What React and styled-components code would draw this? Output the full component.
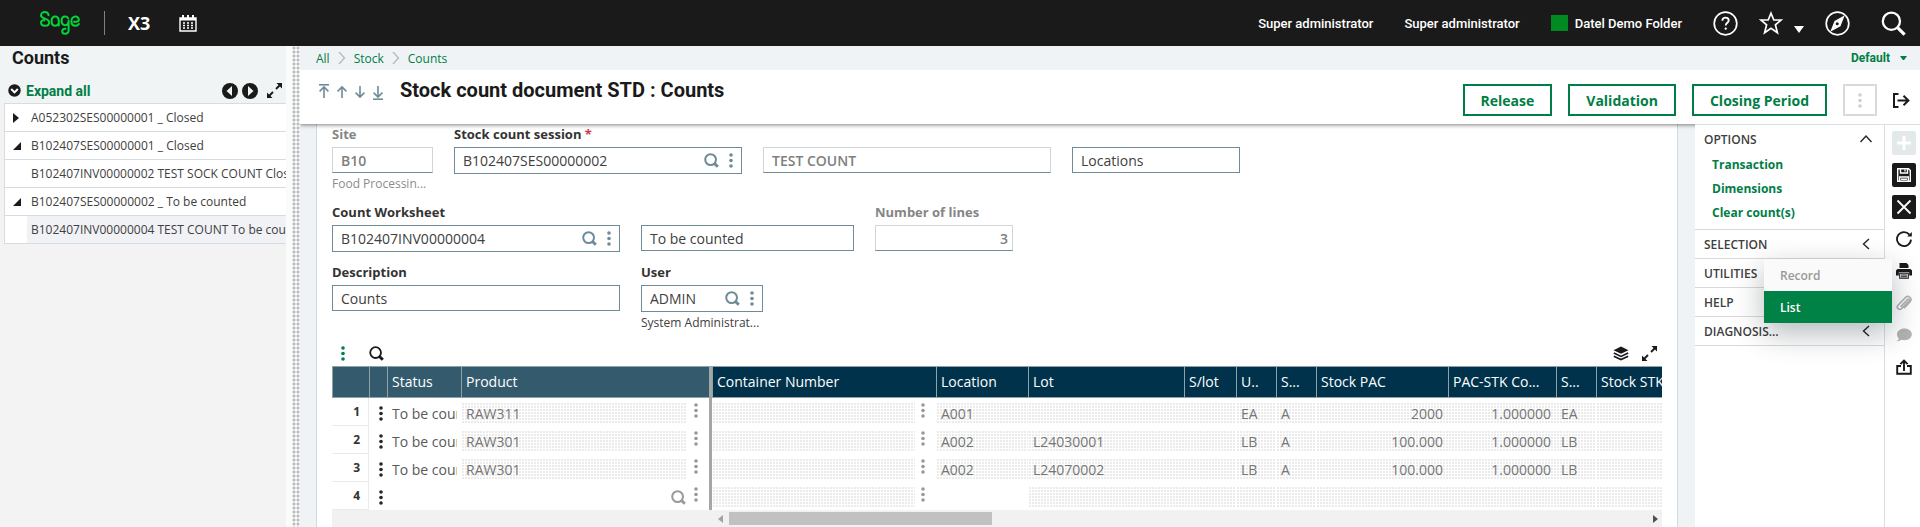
import React, { useState } from 'react';
import styled, { createGlobalStyle, css } from 'styled-components';

const GREEN = '#007e45';
const SLATE = '#6f8b98';

const treeRows = [
    { id: 1, label: 'A052302SES00000001 _ Closed', state: 'closed' },
    { id: 2, label: 'B102407SES00000001 _ Closed', state: 'open' },
    { id: 3, label: 'B102407INV00000002 TEST SOCK COUNT Closed' },
    { id: 4, label: 'B102407SES00000002 _ To be counted', state: 'open' },
    { id: 5, label: 'B102407INV00000004 TEST COUNT To be counted', selected: true },
];

const columns = [
    { key: 'no', title: '', width: 37, frozen: true },
    { key: 'menu', title: '', width: 18, frozen: true },
    { key: 'status', title: 'Status', width: 74, frozen: true },
    { key: 'product', title: 'Product', width: 251, frozen: true, last: true },
    { key: 'container', title: 'Container Number', width: 224 },
    { key: 'location', title: 'Location', width: 92 },
    { key: 'lot', title: 'Lot', width: 156 },
    { key: 'slot', title: 'S/lot', width: 52 },
    { key: 'unit', title: 'U..', width: 40 },
    { key: 'st', title: 'S...', width: 40 },
    { key: 'pac', title: 'Stock PAC', width: 132, right: true },
    { key: 'conv', title: 'PAC-STK Co...', width: 108, right: true },
    { key: 'stk', title: 'S...', width: 40 },
    { key: 'stockStk', title: 'Stock STK' },
];

const lines = [
    { no: 1, status: 'To be counted', product: 'RAW311', location: 'A001', lot: '', unit: 'EA', st: 'A', pac: '2000', conv: '1.000000', stk: 'EA' },
    { no: 2, status: 'To be counted', product: 'RAW301', location: 'A002', lot: 'L24030001', unit: 'LB', st: 'A', pac: '100.000', conv: '1.000000', stk: 'LB' },
    { no: 3, status: 'To be counted', product: 'RAW301', location: 'A002', lot: 'L24070002', unit: 'LB', st: 'A', pac: '100.000', conv: '1.000000', stk: 'LB' },
    { no: 4, empty: true },
];

/* ---------- icons ---------- */

const SageLogo = () => (
    <svg width="40" height="24" viewBox="0 0 40 24" fill="none" stroke="#00d639" strokeWidth="2" strokeLinecap="round" strokeLinejoin="round">
        <path d="M8.6 4.2C8.2 2.2 6.8 1 5 1C2.6 1 1 2.6 1 4.4C1 8 9.2 7.2 9.2 11.2C9.2 13.4 7.4 14.8 5 14.8C2.6 14.8 1 13.4 1 11.6C1 9.8 2.6 8.8 4.2 9.4" />
        <path d="M18.8 14.6V9.8C18.8 7.2 17.4 5.6 15.2 5.6C13 5.6 11.6 7.4 11.6 10.2C11.6 13 13 14.8 15.2 14.8C16.6 14.8 17.6 14.2 18.2 13" />
        <path d="M28.2 7.4C27.6 6.2 26.6 5.6 25.2 5.6C23 5.6 21.6 7.2 21.6 9.8C21.6 12.6 23 14.2 25.2 14.2C27 14.2 28.6 12.6 28.6 9.8V19C28.6 21.4 27.4 22.8 25.2 22.8C23.4 22.8 22.2 21.8 22.2 20.2C22.2 18.6 23.6 17.6 25.4 17.8" />
        <path d="M34 10.8H36.4C38 10.8 38.8 10 38.8 8.8C38.8 7 37.4 5.6 35.4 5.6C33 5.6 31.4 7.4 31.4 10.2C31.4 13 33 14.8 35.4 14.8C37 14.8 38.2 14.2 38.8 13" />
    </svg>
);

const CalendarIcon = () => (
    <svg width="18" height="17" viewBox="0 0 18 17" fill="none">
        <path d="M1 3H17V16H1Z" stroke="#fff" strokeWidth="1.4" />
        <path d="M1 3H17V5.6H1ZM3 0H5V3H3ZM8 0H10V3H8ZM13 0H15V3H13Z" fill="#fff" />
        <path d="M4 8H6M8 8H10M12 8H14M4 10.5H6M8 10.5H10M12 10.5H14M4 13H6M8 13H10M12 13H14" stroke="#fff" strokeWidth="1.5" />
    </svg>
);

const HelpIcon = () => (
    <svg width="25" height="25" viewBox="0 0 25 25" fill="none" stroke="#fff">
        <circle cx="12.5" cy="12.5" r="11.3" strokeWidth="1.7" />
        <path d="M9.4 9.8C9.4 7.8 10.7 6.6 12.5 6.6S15.7 7.8 15.7 9.4C15.7 11.7 12.7 11.8 12.7 14.6" strokeWidth="1.9" />
        <circle cx="12.7" cy="17.6" r=".9" fill="#fff" strokeWidth=".6" />
    </svg>
);

const StarIcon = () => (
    <svg width="24" height="24" viewBox="0 0 24 24" fill="none" stroke="#fff" strokeWidth="1.7" strokeLinejoin="miter">
        <path d="M12 2.2L14.8 9H22.2L16.4 13.8L18.4 21.8L12 17.2L5.6 21.8L7.6 13.8L1.8 9H9.2Z" />
    </svg>
);

const CompassIcon = () => (
    <svg width="25" height="25" viewBox="0 0 25 25" fill="none" stroke="#fff">
        <circle cx="12.5" cy="12.5" r="11.3" strokeWidth="1.7" />
        <path d="M18.6 5.6L15 14.8L6.4 19.4L10 10.4Z" strokeWidth="1.2" fill="#fff" />
        <circle cx="12.2" cy="12.8" r="1.5" fill="#1a1a1a" stroke="none" />
    </svg>
);

const TopSearchIcon = () => (
    <svg width="25" height="25" viewBox="0 0 25 25" fill="none" stroke="#fff">
        <circle cx="10.4" cy="10.2" r="8.6" strokeWidth="2.3" />
        <path d="M16.8 16.8L23.6 23.6" strokeWidth="3.2" />
    </svg>
);

const SearchIcon = ({ color = SLATE, width = 2 }) => (
    <svg width="15" height="15" viewBox="0 0 15 15" fill="none" stroke={color}>
        <circle cx="6.6" cy="6.6" r="5.4" strokeWidth={width} />
        <path d="M10 10L13.8 13.8" strokeWidth="3" />
    </svg>
);

const Dots = ({ color = SLATE }) => (
    <svg width="4" height="15" viewBox="0 0 4 15" fill={color}>
        <circle cx="2" cy="2" r="1.8" /><circle cx="2" cy="7.5" r="1.8" /><circle cx="2" cy="13" r="1.8" />
    </svg>
);

const Caret = ({ color = '#fff', size = 10 }) => (
    <svg width={size} height={size * 0.7} viewBox="0 0 10 7" fill={color}><path d="M0 0H10L5 7Z" /></svg>
);

const ExpandIcon = () => (
    <svg width="15" height="15" viewBox="0 0 15 15" fill="none" stroke="#1a1a1a" strokeWidth="1.8">
        <path d="M9 6L13 2M6 9L2 13" />
        <path d="M9.5 0H15V5.5ZM0 9.5V15H5.5Z" fill="#1a1a1a" stroke="none" />
    </svg>
);

const RoundArrow = ({ flip }) => (
    <svg width="16" height="16" viewBox="0 0 16 16">
        <circle cx="8" cy="8" r="8" fill="#1a1a1a" />
        <path d={flip ? 'M6 3L11.5 8L6 13Z' : 'M10 3L4.5 8L10 13Z'} fill="#f0f4f5" />
    </svg>
);

const ExpandAllIcon = () => (
    <svg width="13" height="13" viewBox="0 0 13 13" fill="none">
        <circle cx="6.5" cy="6.5" r="6.2" fill="#1a1a1a" />
        <path d="M3.2 5L6.5 8.4L9.8 5" stroke="#fff" strokeWidth="2" />
    </svg>
);

const NavArrow = ({ down, bar }) => (
    <svg width="12" height="16" viewBox="0 0 12 16" fill="none" stroke={SLATE} strokeWidth="1.6">
        {down ? <path d="M6 2V13M1.6 8.6L6 13L10.4 8.6" /> : <path d="M6 14V3M1.6 7.4L6 3L10.4 7.4" />}
        {bar && <path d={down ? 'M1 15.2H11' : 'M1 .8H11'} />}
    </svg>
);

const Chevron = ({ d, color = '#262626' }) => (
    <svg width="12" height="12" viewBox="0 0 12 12" fill="none" stroke={color} strokeWidth="1.4"><path d={d} /></svg>
);

const ExitIcon = () => (
    <svg width="17" height="15" viewBox="0 0 17 15" fill="none" stroke="#1a1a1a" strokeWidth="2">
        <path d="M5.5 1H1V14H5.5M4.5 7.5H15M10.5 2.8L15.4 7.5L10.5 12.2" />
    </svg>
);

const LayersIcon = () => (
    <svg width="16" height="15" viewBox="0 0 16 15" fill="none" stroke="#1a1a1a" strokeWidth="1.7">
        <path d="M8 .5L15.5 4.2L8 7.8L.5 4.2Z" fill="#1a1a1a" stroke="none" />
        <path d="M.8 7L8 10.4L15.2 7M.8 10.2L8 13.6L15.2 10.2" />
    </svg>
);

const PlusIcon = () => (
    <svg width="24" height="24" viewBox="0 0 24 24" stroke="#fff" strokeWidth="3"><path d="M12 5V19M5 12H19" /></svg>
);

const SaveIcon = () => (
    <svg width="24" height="24" viewBox="0 0 24 24" fill="none" stroke="#fff" strokeWidth="1.4">
        <path d="M5.7 5.7H16.5L18.3 7.5V18.3H5.7ZM8.5 5.7V10H15.5V5.7M7.7 18.3V14H16.3V18.3M9 16.2H15" />
        <path d="M13 6.5V8.5" />
    </svg>
);

const CloseIcon = () => (
    <svg width="24" height="24" viewBox="0 0 24 24" stroke="#fff" strokeWidth="1.8"><path d="M5.5 5.5L18.5 18.5M18.5 5.5L5.5 18.5" /></svg>
);

const RefreshIcon = () => (
    <svg width="16" height="16" viewBox="0 0 16 16" fill="none" stroke="#1a1a1a" strokeWidth="1.8">
        <path d="M13.4 3.6A7 7 0 1 0 15 8.6" />
        <path d="M15.8 1V5.6H11.2Z" fill="#1a1a1a" stroke="none" />
    </svg>
);

const PrintIcon = () => (
    <svg width="16" height="16" viewBox="0 0 16 16" fill="#1a1a1a">
        <path d="M3.5 0H10.5L12.5 2V5H3.5ZM1.5 6H14.5L16 7.5V12.5H13.2V9.2H2.8V12.5H0V7.5Z" />
        <path d="M3.7 10.2H12.3V15.2H3.7ZM5 12H11M5 13.7H11" fill="#fff" stroke="#1a1a1a" strokeWidth="1.1" />
    </svg>
);

const ClipIcon = () => (
    <svg width="16" height="16" viewBox="0 0 16 16" fill="none" stroke="#b3b3b3" strokeWidth="1.6">
        <path d="M4.6 11.8L11.6 4.4C12.6 3.4 14 4.8 13 5.8L5.6 13.6C3.2 15.8 -.2 12.8 2 10.2L9.6 2.4C12.4 -.4 16.8 3.6 14.2 6.6L8 13.2" />
    </svg>
);

const ChatIcon = () => (
    <svg width="16" height="14" viewBox="0 0 16 14" fill="#b3b3b3">
        <path d="M8.4 .5C4.2 .5 1 3 1 6.2C1 8.2 2 9.6 2.8 10.4C2.4 11.8 1.4 12.6 .3 13.2C2.4 13.4 4.2 12.8 5.4 11.8C11.6 13.2 15.8 10.2 15.8 6.2C15.8 3 12.6 .5 8.4 .5Z" />
    </svg>
);

const ShareIcon = () => (
    <svg width="16" height="16" viewBox="0 0 16 16" fill="none" stroke="#1a1a1a" strokeWidth="1.9">
        <path d="M5 7H1.2V14.8H14.8V7H11M8 12V2M4.4 5.2L8 1.5L11.6 5.2" />
    </svg>
);

/* ---------- page ---------- */

const App = () => {
    const [session, setSession] = useState('B102407SES00000002');
    const [worksheet, setWorksheet] = useState('B102407INV00000004');
    const [description, setDescription] = useState('Counts');
    const [user, setUser] = useState('ADMIN');

    return (
        <Page>
            <GlobalStyle />
            <TopBar>
                <SageLogo />
                <Divider />
                <Product>X3</Product>
                <IconButton aria-label="Calendar"><CalendarIcon /></IconButton>
                <TopRight>
                    <TopLink href="#user">Super administrator</TopLink>
                    <TopLink href="#role">Super administrator</TopLink>
                    <TopLink href="#folder"><Swatch />Datel Demo Folder</TopLink>
                    <TopIcons>
                        <IconButton aria-label="Help"><HelpIcon /></IconButton>
                        <IconButton aria-label="Favorites"><StarIcon /><CaretSlot><Caret /></CaretSlot></IconButton>
                        <IconButton aria-label="Navigation"><CompassIcon /></IconButton>
                    </TopIcons>
                    <IconButton aria-label="Search"><TopSearchIcon /></IconButton>
                </TopRight>
            </TopBar>

            <Body>
                <Aside>
                    <AsideHead>
                        <AsideTitle>Counts</AsideTitle>
                        <AsideTools>
                            <ExpandAll><ExpandAllIcon />Expand all</ExpandAll>
                            <AsideNav>
                                <IconButton aria-label="Previous"><RoundArrow /></IconButton>
                                <IconButton aria-label="Next"><RoundArrow flip /></IconButton>
                                <Enlarge aria-label="Enlarge"><ExpandIcon /></Enlarge>
                            </AsideNav>
                        </AsideTools>
                    </AsideHead>
                    <Tree>
                        {treeRows.map((row) => (
                            <TreeRow key={row.id}>
                                <TreeToggle>
                                    {row.state === 'closed' && <svg width="6" height="10" viewBox="0 0 6 10"><path d="M0 0L6 5L0 10Z" fill="#1a1a1a" /></svg>}
                                    {row.state === 'open' && <svg width="8" height="8" viewBox="0 0 8 8"><path d="M8 0V8H0Z" fill="#1a1a1a" /></svg>}
                                </TreeToggle>
                                <TreeLabel $selected={row.selected}>{row.label}</TreeLabel>
                            </TreeRow>
                        ))}
                    </Tree>
                </Aside>
                <Splitter />

                <Main>
                    <Crumbs>
                        <Crumb href="#all">All</Crumb>
                        <Chevron color="#b3bcc1" d="M3 0L8.5 6L3 12" />
                        <Crumb href="#stock">Stock</Crumb>
                        <Chevron color="#b3bcc1" d="M3 0L8.5 6L3 12" />
                        <Crumb href="#counts">Counts</Crumb>
                        <ViewPicker>
                            <ViewSelect aria-label="View" defaultValue="Default"><option>Default</option></ViewSelect>
                            <Caret color={GREEN} size={7} />
                        </ViewPicker>
                    </Crumbs>
                    <Header>
                        <RecordNav>
                            <IconButton aria-label="First"><NavArrow bar /></IconButton>
                            <IconButton aria-label="Previous record"><NavArrow /></IconButton>
                            <IconButton aria-label="Next record"><NavArrow down /></IconButton>
                            <IconButton aria-label="Last"><NavArrow down bar /></IconButton>
                        </RecordNav>
                        <Title>Stock count document STD : Counts</Title>
                        <Actions>
                            <ActionButton>Release</ActionButton>
                            <ActionButton>Validation</ActionButton>
                            <ActionButton>Closing Period</ActionButton>
                            <MoreButton aria-label="More"><Dots color="#d0d0d0" /></MoreButton>
                            <IconButton aria-label="Exit"><ExitIcon /></IconButton>
                        </Actions>
                    </Header>

                    <Content>
                        <Card>
                            <FieldRow>
                                <Field $width={101}>
                                    <Label htmlFor="site" $muted>Site</Label>
                                    <Box $locked><Input id="site" value="B10" readOnly /></Box>
                                    <Hint $muted>Food Processin...</Hint>
                                </Field>
                                <Field $width={288}>
                                    <Label htmlFor="session">Stock count session <Required>*</Required></Label>
                                    <Box $lookup>
                                        <Input id="session" value={session} onChange={(e) => setSession(e.target.value)} />
                                        <SearchIcon /><Dots />
                                    </Box>
                                </Field>
                                <Field $width={288}>
                                    <Label />
                                    <Box $locked><Input aria-label="Session description" value="TEST COUNT" readOnly /></Box>
                                </Field>
                                <Field $width={168}>
                                    <Label />
                                    <Box><Input aria-label="Count by" defaultValue="Locations" /></Box>
                                </Field>
                            </FieldRow>
                            <FieldRow>
                                <Field $width={288}>
                                    <Label htmlFor="worksheet">Count Worksheet</Label>
                                    <Box $lookup>
                                        <Input id="worksheet" value={worksheet} onChange={(e) => setWorksheet(e.target.value)} />
                                        <SearchIcon /><Dots />
                                    </Box>
                                </Field>
                                <Field $width={213}>
                                    <Label />
                                    <Box><Input aria-label="Worksheet status" defaultValue="To be counted" /></Box>
                                </Field>
                                <Field $width={138}>
                                    <Label htmlFor="lines" $muted>Number of lines</Label>
                                    <Box $locked $right><Input id="lines" value="3" readOnly /></Box>
                                </Field>
                            </FieldRow>
                            <FieldRow>
                                <Field $width={288}>
                                    <Label htmlFor="description">Description</Label>
                                    <Box><Input id="description" value={description} onChange={(e) => setDescription(e.target.value)} /></Box>
                                </Field>
                                <Field $width={122}>
                                    <Label htmlFor="user">User</Label>
                                    <Box $lookup>
                                        <Input id="user" value={user} onChange={(e) => setUser(e.target.value)} />
                                        <SearchIcon /><Dots />
                                    </Box>
                                    <Hint>System Administrat...</Hint>
                                </Field>
                            </FieldRow>

                            <GridTools>
                                <IconButton aria-label="Grid menu"><Dots color={GREEN} /></IconButton>
                                <IconButton aria-label="Search lines"><SearchIcon color="#1a1a1a" width={1.8} /></IconButton>
                                <GridToolsRight>
                                    <IconButton aria-label="Layers"><LayersIcon /></IconButton>
                                    <IconButton aria-label="Full screen"><ExpandIcon /></IconButton>
                                </GridToolsRight>
                            </GridTools>

                            <Table>
                                <colgroup>
                                    {columns.map((col) => <col key={col.key} width={col.width} />)}
                                </colgroup>
                                <thead>
                                    <tr>
                                        {columns.map((col) => (
                                            <Th key={col.key} $frozen={col.frozen} $last={col.last}>{col.title}</Th>
                                        ))}
                                    </tr>
                                </thead>
                                <tbody>
                                    {lines.map((line) => (
                                        <tr key={line.no}>
                                            <LineNo>{line.no}</LineNo>
                                            <Td><LineMenu><Dots color="#262626" /></LineMenu></Td>
                                            <Td><Status>{line.status}</Status></Td>
                                            <Td $last>
                                                <Prompt>
                                                    <Cell $dotted={!line.empty}>{line.product}</Cell>
                                                    {line.empty && <SearchIcon color="#999" />}
                                                    <PromptDots $wide><Dots color="#999" /></PromptDots>
                                                </Prompt>
                                            </Td>
                                            <Td>
                                                <Prompt>
                                                    <Cell $dotted />
                                                    <PromptDots><Dots color="#999" /></PromptDots>
                                                </Prompt>
                                            </Td>
                                            {columns.slice(5).map((col) => (
                                                <Td key={col.key}>
                                                    <Cell $right={col.right} $dotted={!(line.empty && col.key === 'location')}>{line[col.key]}</Cell>
                                                </Td>
                                            ))}
                                        </tr>
                                    ))}
                                </tbody>
                            </Table>
                            <ScrollBar>
                                <ScrollTrack>
                                    <svg width="5" height="8" viewBox="0 0 5 8"><path d="M5 0V8L0 4Z" fill="#a3a3a3" /></svg>
                                    <Thumb />
                                    <svg width="5" height="8" viewBox="0 0 5 8"><path d="M0 0V8L5 4Z" fill="#505050" /></svg>
                                </ScrollTrack>
                            </ScrollBar>
                        </Card>

                        <Options>
                            <Section>
                                <SectionHead>OPTIONS<Chevron d="M.5 9L6 3L11.5 9" /></SectionHead>
                                <Links>
                                    <OptionLink href="#transaction">Transaction</OptionLink>
                                    <OptionLink href="#dimensions">Dimensions</OptionLink>
                                    <OptionLink href="#clear">Clear count(s)</OptionLink>
                                </Links>
                            </Section>
                            <Section><SectionHead>SELECTION<Chevron d="M9 1L3.5 6L9 11" /></SectionHead></Section>
                            <Section>
                                <SectionHead>UTILITIES</SectionHead>
                                <Menu>
                                    <MenuItem disabled>Record</MenuItem>
                                    <MenuItem $active>List</MenuItem>
                                </Menu>
                            </Section>
                            <Section><SectionHead>HELP</SectionHead></Section>
                            <Section><SectionHead>DIAGNOSIS...<Chevron d="M9 1L3.5 6L9 11" /></SectionHead></Section>
                        </Options>

                        <SideTools>
                            <ToolButton aria-label="New" $bg="#e3e8eb"><PlusIcon /></ToolButton>
                            <ToolButton aria-label="Save" $bg="#1a1a1a"><SaveIcon /></ToolButton>
                            <ToolButton aria-label="Cancel" $bg="#1a1a1a"><CloseIcon /></ToolButton>
                            <ToolButton aria-label="Refresh"><RefreshIcon /></ToolButton>
                            <ToolButton aria-label="Print"><PrintIcon /></ToolButton>
                            <ToolButton aria-label="Attachments"><ClipIcon /></ToolButton>
                            <ToolButton aria-label="Comments"><ChatIcon /></ToolButton>
                            <ToolButton aria-label="Share"><ShareIcon /></ToolButton>
                        </SideTools>
                    </Content>
                </Main>
            </Body>
        </Page>
    )
}

const GlobalStyle = createGlobalStyle`
    * { box-sizing: border-box; }
    body {
        margin: 0;
        font-family: 'Open Sans', 'Noto Sans', sans-serif;
        font-size: 14px;
        color: #262626;
    }
    svg { display: block; flex: none; }
    button, input, select { font-family: inherit; }
    a { text-decoration: none; }
`;

const Page = styled.div`
    display: flex;
    flex-direction: column;
    height: 100vh;
    overflow: hidden;
`;

const IconButton = styled.button`
    display: flex;
    align-items: center;
    padding: 0;
    border: 0;
    background: none;
    cursor: pointer;
`;

const TopBar = styled.header`
    display: flex;
    align-items: center;
    flex: none;
    height: 46px;
    padding: 0 14px 0 40px;
    background: #1a1a1a;
    color: #fff;
`;

const Divider = styled.span`
    width: 1px;
    height: 24px;
    margin: 0 23px 0 24px;
    background: #808080;
`;

const Product = styled.span`
    margin-right: 29px;
    font-size: 18px;
    font-weight: 700;
`;

const TopRight = styled.div`
    display: flex;
    align-items: center;
    gap: 31px;
    margin-left: auto;
`;

const TopLink = styled.a`
    display: flex;
    align-items: center;
    gap: 7px;
    font-family: Roboto, sans-serif;
    font-size: 13px;
    font-weight: 500;
    color: #fff;
`;

const Swatch = styled.span`
    width: 17px;
    height: 16px;
    background: #008a21;
`;

const TopIcons = styled.div`
    display: flex;
    align-items: center;
    gap: 21px;
`;

const CaretSlot = styled.span`
    padding: 12px 0 0 11px;
`;

const Body = styled.div`
    display: flex;
    flex: 1;
    min-height: 0;
`;

const Aside = styled.aside`
    flex: none;
    width: 286px;
    background: #f3f3f4;
`;

const AsideHead = styled.div`
    padding: 0 4px 0 8px;
    background: #f0f4f5;
`;

const AsideTitle = styled.h2`
    margin: 0;
    padding-left: 4px;
    font: 700 18px/24px Roboto, sans-serif;
    color: #1a1a1a;
`;

const AsideTools = styled.div`
    display: flex;
    align-items: center;
    justify-content: space-between;
    height: 33px;
    padding-top: 8px;
`;

const ExpandAll = styled(IconButton)`
    gap: 5px;
    font: 700 14px Roboto, sans-serif;
    color: ${GREEN};
`;

const AsideNav = styled.div`
    display: flex;
    gap: 4px;
`;

const Enlarge = styled(IconButton)`
    margin-left: 5px;
`;

const Tree = styled.ul`
    margin: 0 0 0 4px;
    padding: 0;
    border: 1px solid #d5dde1;
    border-width: 1px 0 0 1px;
    list-style: none;
    background: #fff;
`;

const TreeRow = styled.li`
    display: flex;
    height: 28px;
    border-bottom: 1px solid #d5dde1;
`;

const TreeToggle = styled.span`
    display: flex;
    align-items: center;
    flex: none;
    width: 22px;
    padding-left: 8px;
`;

const TreeLabel = styled.span`
    flex: 1;
    padding-left: 4px;
    overflow: hidden;
    white-space: nowrap;
    font-size: 12px;
    line-height: 27px;
    color: #404040;
    background: ${(p) => (p.$selected ? '#f1f2f5' : 'none')};
`;

const Splitter = styled.div`
    flex: none;
    width: 14px;
    padding: 0 0 0 6px;
    background: radial-gradient(circle at 2px 2px, #bdbdbd 1px, transparent 2px) 0 0 / 4px 4px content-box, #fafbfb;
`;

const Main = styled.main`
    display: flex;
    flex-direction: column;
    flex: 1;
    min-width: 0;
`;

const Crumbs = styled.nav`
    display: flex;
    align-items: center;
    gap: 6px;
    flex: none;
    height: 24px;
    padding: 0 13px 0 16px;
    background: #eff3f5;
`;

const Crumb = styled.a`
    font-size: 12px;
    color: ${GREEN};
`;

const ViewPicker = styled.div`
    display: flex;
    align-items: center;
    gap: 10px;
    margin-left: auto;
`;

const ViewSelect = styled.select`
    appearance: none;
    padding: 0;
    border: 0;
    background: none;
    font: 700 12px Roboto, sans-serif;
    color: ${GREEN};
`;

const Header = styled.div`
    position: relative;
    z-index: 1;
    display: flex;
    align-items: flex-start;
    flex: none;
    height: 54px;
    padding: 8px 10px 0 18px;
    background: #fff;
    box-shadow: 0 1px 4px rgba(0, 0, 0, 0.5);
    clip-path: inset(0 0 -6px 0);
`;

const RecordNav = styled.div`
    display: flex;
    align-items: center;
    gap: 6px;
    height: 27px;
`;

const Title = styled.h1`
    margin: 0 0 0 16px;
    font: 700 20px/24px Roboto, sans-serif;
    color: #1a1a1a;
`;

const Actions = styled.div`
    display: flex;
    gap: 16px;
    margin: 6px 0 0 auto;
`;

const ActionButton = styled.button`
    height: 32px;
    padding: 0 16px;
    border: 2px solid ${GREEN};
    background: #fff;
    font-size: 14px;
    font-weight: 700;
    color: ${GREEN};
    cursor: pointer;
`;

const MoreButton = styled(IconButton)`
    justify-content: center;
    width: 34px;
    height: 32px;
    border: 2px solid #d9d9d9;
`;

const Content = styled.div`
    display: flex;
    flex: 1;
    min-height: 0;
    padding-left: 16px;
    background: #eff3f5;
`;

const Card = styled.section`
    flex: 1;
    min-width: 0;
    margin-right: 17px;
    padding: 2px 15px 0;
    border: 1px solid #d0dae0;
    border-width: 0 1px;
    background: #fff;
`;

const FieldRow = styled.div`
    display: flex;
    align-items: flex-start;
    gap: 21px;
    margin-bottom: 12px;
`;

const Field = styled.div`
    width: ${(p) => p.$width}px;
`;

const Label = styled.label`
    display: block;
    height: 16px;
    margin-bottom: 5px;
    font-size: 13px;
    line-height: 16px;
    font-weight: 700;
    color: ${(p) => (p.$muted ? '#858585' : '#333')};
`;

const Required = styled.span`
    color: #cd384b;
`;

const Input = styled.input`
    flex: 1;
    min-width: 0;
    width: 100%;
    padding: 0;
    border: 0;
    outline: 0;
    background: none;
    font-size: 14px;
    color: #404040;
`;

const Box = styled.div`
    display: flex;
    align-items: center;
    gap: 10px;
    height: ${(p) => (p.$lookup ? 27 : 26)}px;
    padding: 0 ${(p) => (p.$right ? 4 : 8)}px;
    border: 1px solid ${SLATE};
    background: #fff;
    ${(p) => p.$locked && css`
        border-color: #ccd6db #ccd6db ${SLATE};
        ${Input} { color: #808080; font-weight: 600; }
    `}
    ${(p) => p.$right && css`
        ${Input} { text-align: right; }
    `}
`;

const Hint = styled.div`
    margin-top: 3px;
    font-size: 12px;
    line-height: 16px;
    white-space: nowrap;
    color: ${(p) => (p.$muted ? '#8c8c8c' : '#404040')};
`;

const GridTools = styled.div`
    display: flex;
    align-items: center;
    gap: 24px;
    height: 25px;
    margin-top: -2px;
    padding: 0 5px 0 9px;
`;

const GridToolsRight = styled.div`
    display: flex;
    gap: 13px;
    margin-left: auto;
`;

const Table = styled.table`
    width: 100%;
    table-layout: fixed;
    border-collapse: separate;
    border-spacing: 0;
`;

const Th = styled.th`
    height: 32px;
    padding: 0 4px 2px;
    border: 1px solid #8fa3a6;
    border-width: 1px 0 1px 1px;
    border-right: ${(p) => (p.$last ? '3px solid #a6a6a6' : '0')};
    overflow: hidden;
    white-space: nowrap;
    text-align: left;
    font-weight: 400;
    color: #fff;
    background: ${(p) => (p.$frozen ? '#335b6d' : '#00324c')};
`;

const Td = styled.td`
    height: 28px;
    padding: 4px 0 2px;
    border-right: ${(p) => (p.$last ? '3px solid #a6a6a6' : '0')};
    overflow: hidden;
    color: #757575;
`;

const LineNo = styled.td`
    padding: 0 8px 0 0;
    border: 1px solid #ebebeb;
    border-width: 0 1px 1px 0;
    text-align: right;
    font-size: 12px;
    font-weight: 700;
    color: #333;
`;

const LineMenu = styled.div`
    display: flex;
    justify-content: center;
    padding-left: 6px;
`;

const Status = styled.div`
    margin: 0 4px 0 5px;
    overflow: hidden;
    white-space: nowrap;
    line-height: 24px;
    height: 22px;
    color: #595959;
`;

const Cell = styled.div`
    flex: 1;
    height: 22px;
    padding: 0 5px;
    line-height: 24px;
    text-align: ${(p) => (p.$right ? 'right' : 'left')};
    background: ${(p) => (p.$dotted ? 'radial-gradient(circle at 1px 1px, #ebebeb 1px, transparent 1px) 1px 1px / 3px 3px' : 'none')};
`;

const Prompt = styled.div`
    display: flex;
    align-items: center;
`;

const PromptDots = styled.span`
    display: flex;
    justify-content: center;
    width: ${(p) => (p.$wide ? 23 : 21)}px;
    padding: 0 ${(p) => (p.$wide ? 4 : 6)}px 5px 0;
`;

const ScrollBar = styled.div`
    height: 17px;
    padding-left: 380px;
    background: #f1f1f1;
`;

const ScrollTrack = styled.div`
    display: flex;
    align-items: center;
    justify-content: space-between;
    height: 17px;
    padding: 0 4px 0 6px;
`;

const Thumb = styled.div`
    width: 28%;
    height: 13px;
    margin: 0 auto 0 6px;
    background: #c1c1c1;
`;

const Options = styled.aside`
    position: relative;
    z-index: 2;
    flex: none;
    width: 190px;
    border: 1px solid #d9e0e4;
    border-width: 1px 1px 0 0;
    background: #fff;
`;

const Section = styled.div`
    position: relative;
    border-bottom: 1px solid #d9d9d9;
`;

const SectionHead = styled.div`
    display: flex;
    align-items: center;
    justify-content: space-between;
    height: 28px;
    padding: 0 12px 0 9px;
    font-size: 12px;
    font-weight: 600;
    color: #404040;
`;

const Links = styled.div`
    display: flex;
    flex-direction: column;
    padding: 0 0 4px 17px;
`;

const OptionLink = styled.a`
    font-size: 12px;
    line-height: 24px;
    font-weight: 700;
    color: ${GREEN};
`;

const Menu = styled.div`
    position: absolute;
    z-index: 3;
    top: 0;
    right: -8px;
    width: 128px;
    box-shadow: 0 10px 30px rgba(0, 20, 30, 0.3);
`;

const MenuItem = styled.button`
    display: block;
    width: 100%;
    height: 32px;
    padding: 0 16px;
    border: 0;
    text-align: left;
    font-size: 12px;
    font-weight: 600;
    color: ${(p) => (p.$active ? '#fff' : '#999')};
    background: ${(p) => (p.$active ? '#008146' : '#fafafa')};
`;

const SideTools = styled.div`
    position: relative;
    z-index: 1;
    display: flex;
    flex-direction: column;
    align-items: center;
    gap: 8px;
    flex: none;
    width: 35px;
    padding: 6px 0 0 2px;
    border-top: 1px solid #d9e0e4;
    background: #fff;
`;

const ToolButton = styled(IconButton)`
    justify-content: center;
    width: 24px;
    height: 24px;
    border-radius: 2px;
    background: ${(p) => p.$bg || 'none'};
`;

export default App
